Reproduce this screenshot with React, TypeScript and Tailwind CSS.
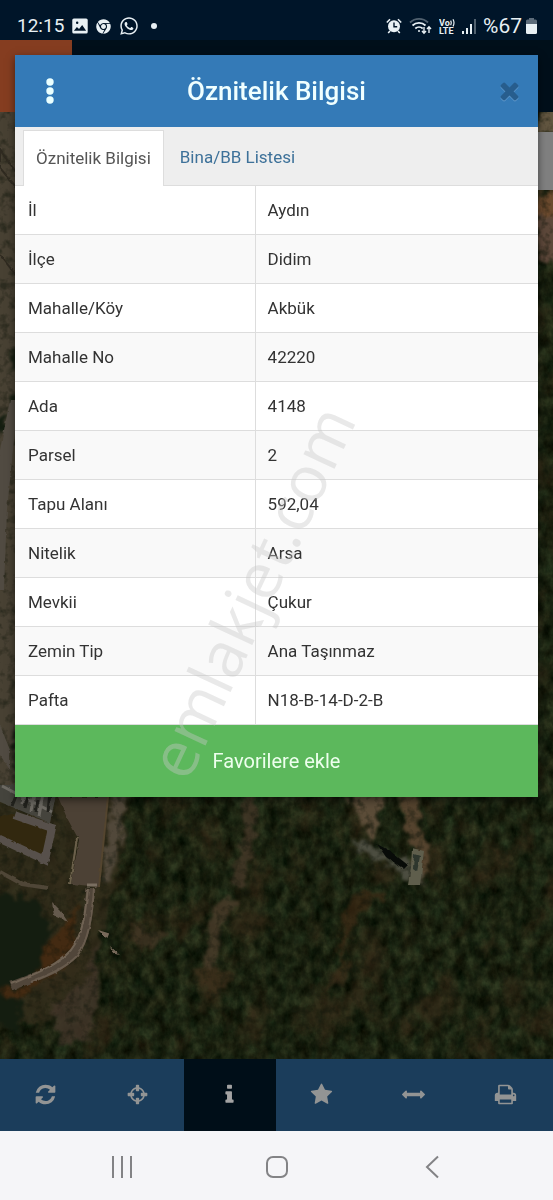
import type { ReactNode } from "react";
import { FaWhatsapp, FaChrome } from "react-icons/fa";

const FONT = "font-[Roboto,'Noto_Sans',sans-serif]";

const rows: [string, string][] = [
  ["İl", "Aydın"],
  ["İlçe", "Didim"],
  ["Mahalle/Köy", "Akbük"],
  ["Mahalle No", "42220"],
  ["Ada", "4148"],
  ["Parsel", "2"],
  ["Tapu Alanı", "592,04"],
  ["Nitelik", "Arsa"],
  ["Mevkii", "Çukur"],
  ["Zemin Tip", "Ana Taşınmaz"],
  ["Pafta", "N18-B-14-D-2-B"],
];

const tools = [
  {
    label: "Yenile",
    d: "M1639 1056q0 5-1 7-64 268-268 434.5t-478 166.5q-146 0-282.5-55t-243.5-157l-129 129q-19 19-45 19t-45-19-19-45v-448q0-26 19-45t45-19h448q26 0 45 19t19 45-19 45l-137 137q71 66 161 102t187 36q134 0 250-65t186-179q11-17 53-117 8-23 30-23h192q13 0 22.5 9.5t9.5 22.5zm25-800v448q0 26-19 45t-45 19h-448q-26 0-45-19t-19-45 19-45l138-138q-148-137-349-137-134 0-250 65t-186 179q-11 17-53 117-8 23-30 23h-199q-13 0-22.5-9.5t-9.5-22.5v-7q65-268 270-434.5t480-166.5q146 0 284 55.5t245 156.5l130-129q19-19 45-19t45 19 19 45z",
  },
  {
    label: "Konum",
    d: "M1325 1024h-109q-26 0-45-19t-19-45v-128q0-26 19-45t45-19h109q-32-108-112.5-188.5t-188.5-112.5v109q0 26-19 45t-45 19h-128q-26 0-45-19t-19-45v-109q-108 32-188.5 112.5t-112.5 188.5h109q26 0 45 19t19 45v128q0 26-19 45t-45 19h-109q32 108 112.5 188.5t188.5 112.5v-109q0-26 19-45t45-19h128q26 0 45 19t19 45v109q108-32 188.5-112.5t112.5-188.5zm339-192v128q0 26-19 45t-45 19h-143q-37 161-154.5 278.5t-278.5 154.5v143q0 26-19 45t-45 19h-128q-26 0-45-19t-19-45v-143q-161-37-278.5-154.5t-154.5-278.5h-143q-26 0-45-19t-19-45v-128q0-26 19-45t45-19h143q37-161 154.5-278.5t278.5-154.5v-143q0-26 19-45t45-19h128q26 0 45 19t19 45v143q161 37 278.5 154.5t154.5 278.5h143q26 0 45 19t19 45z",
  },
  {
    label: "Bilgi",
    active: true,
    d: "M1216 1344v128q0 26-19 45t-45 19h-512q-26 0-45-19t-19-45v-128q0-26 19-45t45-19h64v-384h-64q-26 0-45-19t-19-45v-128q0-26 19-45t45-19h384q26 0 45 19t19 45v576h64q26 0 45 19t19 45zm-128-1152v192q0 26-19 45t-45 19h-256q-26 0-45-19t-19-45v-192q0-26 19-45t45-19h256q26 0 45 19t19 45z",
  },
  {
    label: "Favoriler",
    d: "M1728 647q0 22-26 48l-363 354 86 500q1 7 1 20 0 21-10.5 35.5t-30.5 14.5q-19 0-40-12l-449-236-449 236q-22 12-40 12-21 0-31.5-14.5t-10.5-35.5q0-6 2-20l86-500-364-354q-25-27-25-48 0-37 56-46l502-73 225-455q19-41 49-41t49 41l225 455 502 73q56 9 56 46z",
  },
  {
    label: "Ölçüm",
    d: "M1792 896q0 26-19 45l-256 256q-19 19-45 19t-45-19-19-45v-128h-1024v128q0 26-19 45t-45 19-45-19l-256-256q-19-19-19-45t19-45l256-256q19-19 45-19t45 19 19 45v128h1024v-128q0-26 19-45t45-19 45 19l256 256q19 19 19 45z",
  },
  {
    label: "Yazdır",
    d: "M448 1536h896v-256h-896v256zm0-640h896v-384h-160q-40 0-68-28t-28-68v-160h-640v640zm1152 64q0-26-19-45t-45-19-45 19-19 45 19 45 45 19 45-19 19-45zm128 0v416q0 13-9.5 22.5t-22.5 9.5h-224v160q0 40-28 68t-68 28h-960q-40 0-68-28t-28-68v-160h-224q-13 0-22.5-9.5t-9.5-22.5v-416q0-79 56.5-135.5t135.5-56.5h64v-544q0-40 28-68t68-28h672q40 0 88 20t76 48l152 152q28 28 48 76t20 88v256h64q79 0 135.5 56.5t56.5 135.5z",
  },
];

function StatusBar() {
  return (
    <header className="flex h-10 items-center justify-between bg-[#001529] pl-[17px] pr-4 pt-3 text-[#e8f0f4]">
      <div className="flex items-center gap-2">
        <span className="text-[19px] leading-6">12:15</span>
        <svg viewBox="0 0 17 17" className="size-4" fill="currentColor">
          <path
            fillRule="evenodd"
            d="M2 .5h13A1.7 1.7 0 0 1 16.700 2.200v12.600A1.700 1.700 0 0 1 15 16.500H2A1.700 1.700 0 0 1 .300 14.800V2.200A1.700 1.700 0 0 1 2 .500zM2 13.500h13l-4.200-6-3.300 4.200-2.300-2.200zM5.500 3.800a1.300 1.300 0 1 0 0 2.600 1.300 1.300 0 0 0 0-2.600z"
          />
        </svg>
        <FaChrome className="size-[15px]" />
        <FaWhatsapp className="size-5" />
        <span className="ml-1 size-1.5 rounded-full bg-current" />
      </div>
      <div className="flex items-center gap-[7px]">
        <svg viewBox="0 0 16 16" className="size-4">
          <circle cx="8" cy="8.300" r="6" fill="currentColor" />
          <path d="M.8 4.500 4 1.300M15.200 4.500 12 1.300M4 13l-1.800 2M12 13l1.800 2" stroke="currentColor" strokeWidth="1.600" />
          <path d="M8 4.500v4.300h3.200" fill="none" stroke="#001529" strokeWidth="1.400" />
        </svg>
        <svg viewBox="0 0 23 18" className="h-[18px] w-[23px]" fill="none" stroke="currentColor" strokeWidth="1.800">
          <path d="M1 5.500a13 13 0 0 1 18 0" opacity=".35" />
          <path d="M3.500 8.500a9.500 9.500 0 0 1 13 0M6.300 11.500a5.500 5.500 0 0 1 7.400 0" />
          <circle cx="10" cy="14" r="1" fill="currentColor" stroke="none" />
          <path d="M15 10v6M13 14l2 2.200L17 14M20 16v-6M18 12l2-2.200L22 12" strokeWidth="1.400" />
        </svg>
        <svg viewBox="0 0 16 17" className="h-[17px] w-4" fill="currentColor">
          <text x="0" y="8" fontFamily="Roboto" fontWeight="700" fontSize="9">Vo</text>
          <path d="M11.600 2.600q1.300 2.200 0 4.600M14 1.200q2 3.600 0 7.200" fill="none" stroke="currentColor" strokeWidth="1.200" />
          <text x="0" y="16" fontFamily="Roboto" fontWeight="700" fontSize="9">LTE</text>
        </svg>
        <svg viewBox="0 0 14 15" className="h-[15px] w-[14px]" fill="currentColor">
          <path d="M0 12h2v3H0zM4 9h2v6H4zM8 5h2v10H8z" />
          <path d="M12 0h2v15h-2z" opacity=".35" />
        </svg>
        <span className="flex items-center gap-1">
          <span className="text-[21px] leading-6">%67</span>
          <svg viewBox="0 0 11 16" className="h-4 w-[11px]" fill="currentColor">
            <path d="M3 0h5v1.500h1.500A1.500 1.500 0 0 1 11 3v3H0V3a1.500 1.500 0 0 1 1.500-1.500H3z" opacity=".4" />
            <path d="M0 6h11v8.500a1.500 1.500 0 0 1-1.500 1.500h-8A1.500 1.500 0 0 1 0 14.500z" />
          </svg>
        </span>
      </div>
    </header>
  );
}

function SatelliteMap() {
  return (
    <svg
      className="absolute inset-0 size-full"
      viewBox="0 0 553 1019"
      preserveAspectRatio="none"
      aria-hidden="true"
    >
      <defs>
        <filter id="trees" x="0" y="0" width="100%" height="100%" colorInterpolationFilters="sRGB">
          <feTurbulence type="fractalNoise" baseFrequency="0.09 0.065" numOctaves="4" seed="8" />
          <feColorMatrix values=".24 .06 0 0 -.045  .26 0 0 0 .005  .18 0 0 0 -.025  0 0 0 0 1" />
        </filter>
        <filter id="soil" x="0" y="0" width="100%" height="100%" colorInterpolationFilters="sRGB">
          <feTurbulence type="fractalNoise" baseFrequency="0.026 0.02" numOctaves="5" seed="21" />
          <feColorMatrix values="0 0 0 0 .23  0 0 0 0 .17  0 0 0 0 .1  4 0 0 0 -2.05" />
        </filter>
        <filter id="rough" x="-20%" y="-20%" width="140%" height="140%" colorInterpolationFilters="sRGB">
          <feTurbulence type="fractalNoise" baseFrequency="0.1" numOctaves="3" seed="4" result="n" />
          <feDisplacementMap in="SourceGraphic" in2="n" scale="18" xChannelSelector="R" yChannelSelector="G" />
          <feGaussianBlur stdDeviation="1.4" />
        </filter>
        <filter id="soft" colorInterpolationFilters="sRGB">
          <feTurbulence type="fractalNoise" baseFrequency="0.15" numOctaves="2" seed="2" result="n" />
          <feDisplacementMap in="SourceGraphic" in2="n" scale="3" xChannelSelector="R" yChannelSelector="G" />
          <feGaussianBlur stdDeviation=".6" />
        </filter>
        <filter id="grain" x="0" y="0" width="100%" height="100%" colorInterpolationFilters="sRGB">
          <feTurbulence type="fractalNoise" baseFrequency="0.12" numOctaves="3" seed="13" />
          <feColorMatrix values="0 0 0 0 .06  0 0 0 0 .08  0 0 0 0 .04  3 0 0 0 -1.4" />
        </filter>
      </defs>
      <rect width="553" height="1019" fill="#1d2413" />
      <rect width="553" height="1019" filter="url(#trees)" />
      <rect width="553" height="1019" filter="url(#soil)" opacity=".55" />

      {/* cleared ground and foot paths */}
      <g filter="url(#rough)">
        <path d="M-10 60h32v700h-32z" fill="#484133" />
        <path d="M-10 750h138l-6 65-16 55-12 60-40 50-64 10z" fill="#352d1c" opacity=".75" />
        <path d="M112 750h14l-4 40-10 50h-10z" fill="#51483a" />
        <path d="M80 860 70 920 24 955-8 966V930l44-12 26-30z" fill="#432a12" />
        <path d="M98 900 85 940 50 970 60 1005 90 1000 98 960z" fill="#44372a" opacity=".8" />
        <path d="M130 885l40 12-30 14z" fill="#463826" opacity=".7" />
        <path d="M248 750q5 40-2 60l-10 36" fill="none" stroke="#463a29" strokeWidth="12" opacity=".8" />
        <path d="M236 866q-14-4-20 16l-8 50" fill="none" stroke="#483b29" strokeWidth="12" opacity=".85" />
        <path d="M190 925l50 10-30 20zM330 935l22-15-5 22-25 10z" fill="#3f301d" opacity=".7" />
        <path d="M345 750h44l-12 28-4 26-12-22z" fill="#5b4c38" />
        <path d="M398 750h18l6 40 8 24-7 32-13-6 5-25-12-30z" fill="#54432e" />
        <path d="M354 800l16 2 20 14 26 8 10 22-18-8-24-16-24-8z" fill="#4c4d40" />
        <path d="M362 850l26 3-30 20-12 30-8 40 4-70z" fill="#3c2814" opacity=".7" />
        <path d="M538 150h24v34h-24z" fill="#6b4a2e" />
        <path d="M538 178h24v42h-24z" fill="#5d483a" />
        <path d="M538 70h24v24h-24z" fill="#625640" />
      </g>
      <rect width="553" height="1019" filter="url(#grain)" opacity=".45" />

      {/* tree groups next to the street */}
      <g filter="url(#rough)" fill="#141d10">
        <path d="M-6 856l26 2 22 8 8 20-8 34-18 26L-6 950z" />
        <path d="M10 310h10v22H10zM10 355h10v30H10zM12 690h8v40h-8zM-2 375h9v20h-9z" />
        <path d="M-6 950l28 12-4 30-24-6z" />
      </g>

      {/* buildings, street and road */}
      <g filter="url(#soft)">
        <path d="M10 360h8L7 470l-3 80H-2V420zM-2 680l12 30v20L-2 712z" fill="#514b42" />
        <path d="M0 110l16 22v15L0 128zM0 215l16 20" fill="none" stroke="#2f2a20" strokeWidth="2" />
        <path d="M-2 745h60l-8 38-52-22z" fill="#45443d" />
        <path d="M2 746l50 26M24 750l-2 14M34 752l-3 20M43 754l-4 22" stroke="#6d6a63" strokeWidth="3" />
        <path d="M16 756l-4 10M28 756l-3 12M38 760l-2 12M50 752l-2 20" stroke="#22221d" strokeWidth="3" />
        <path d="M12 774l42 14-8 34-48-22V778z" fill="#32280f" />
        <path d="M14 775l38 13-7 32-47-22" fill="none" stroke="#57504b" strokeWidth="8" />
        <path d="M58 757h50l-9 90-28-3 8-44-12-22z" fill="#4c4135" />
        <path d="M77 798l-7 46" stroke="#6b604b" strokeWidth="2" />
        <path d="M108 757l-9 90" stroke="#54452f" strokeWidth="2" />
        <path d="M0 832l22 12 26 4" fill="none" stroke="#4f4637" strokeWidth="4" />
        <path d="M52 862l8 8 8 12-14-6z" fill="#655a4d" />
        <path d="M91 848c-3 30-5 50-18 66-14 16-36 22-62 32" fill="none" stroke="#51463a" strokeWidth="9" />
        <path d="M88 848c-3 28-5 46-17 62-14 16-36 24-60 34" fill="none" stroke="#6f6253" strokeWidth="2" />
        <path d="M94 848c-2 28-5 52-17 68-12 12-26 18-46 26" fill="none" stroke="#685b4d" strokeWidth="2" />
        <path d="M87 845h10" stroke="#7a6f61" strokeWidth="3" />
        <path d="M377 804l13 7 18 14-4 4-18-12z" fill="#080b08" />
        <path d="M412 808l12 3-4 34h-12l3-18z" fill="#5f5e4c" />
        <path d="M414 814l6 2-3 16-4-3z" fill="#2e362d" />
        <path d="M110 906l10 9-7-2zM98 890l10 3-2 5-4-4z" fill="#77695a" />
      </g>
    </svg>
  );
}

function Cell({ children, first }: { children: ReactNode; first?: boolean }) {
  return first ? (
    <th scope="row" className="w-[46%] border-r border-[#ddd] px-[13px] text-left font-normal">
      {children}
    </th>
  ) : (
    <td className="px-3">{children}</td>
  );
}

function AttributeDialog() {
  return (
    <section
      role="dialog"
      aria-labelledby="dialog-title"
      className="relative mx-[15px] mt-[15px] bg-white shadow-[0_3px_8px_rgba(0,0,0,0.5)]"
    >
      <div className="flex h-[72px] items-center justify-between bg-[#347ab7] px-[15px]">
        <button type="button" aria-label="Menü" className="flex w-10 justify-center text-[#eaffff]">
          <svg viewBox="0 0 8 26" className="h-[26px] w-2" fill="currentColor">
            <circle cx="4" cy="4" r="3.700" />
            <circle cx="4" cy="13" r="3.700" />
            <circle cx="4" cy="22" r="3.700" />
          </svg>
        </button>
        <h1 id="dialog-title" className="text-[26px] font-medium leading-8 text-[#f0ffff]">
          Öznitelik Bilgisi
        </h1>
        <button type="button" aria-label="Kapat" className="flex w-10 justify-end">
          <svg viewBox="0 0 1792 1920" className="h-[29px] w-[27px] text-[#275d8d] drop-shadow-[0_1px_0_#5f98cb]" fill="currentColor">
            <path d="M1490 1322q0 40-28 68l-136 136q-28 28-68 28t-68-28l-294-294-294 294q-28 28-68 28t-68-28l-136-136q-28-28-28-68t28-68l294-294-294-294q-28-28-28-68t28-68l136-136q28-28 68-28t68 28l294 294 294-294q28-28 68-28t68 28l136 136q28 28 28 68t-28 68l-294 294 294 294q28 28 28 68z" />
          </svg>
        </button>
      </div>

      <div role="tablist" className="flex h-[59px] items-end border-b border-[#ddd] bg-[#eeeeee] pl-2 text-[17px] leading-6">
        <button
          type="button"
          role="tab"
          aria-selected="true"
          className="-mb-px h-14 border border-b-0 border-[#ddd] bg-white px-3 pb-0.5 text-[#555]"
        >
          Öznitelik Bilgisi
        </button>
        <button type="button" role="tab" aria-selected="false" className="h-14 px-4 text-[#3d7199]">
          Bina/BB Listesi
        </button>
      </div>

      <table className="w-full border-separate border-spacing-0 text-[17px] leading-6 text-[#333]">
        <tbody>
          {rows.map(([name, value]) => (
            <tr key={name} className="h-[49px] even:bg-[#f9f9f9] [&>*]:border-b [&>*]:border-b-[#ddd]">
              <Cell first>{name}</Cell>
              <Cell>{value}</Cell>
            </tr>
          ))}
        </tbody>
      </table>

      <button type="button" className="block h-[72px] w-full bg-[#5cb85c] text-[20px] leading-7 text-[#edffed]">
        Favorilere ekle
      </button>

      <div className="pointer-events-none absolute bottom-0 left-0 right-10 top-[335px] flex items-center justify-center">
        <span className="-rotate-[65deg] whitespace-nowrap pb-3 font-['Open_Sans',sans-serif] text-[64px] font-medium leading-none text-[#c8c8c8]/40">
          emlakjet.com
        </span>
      </div>
    </section>
  );
}

export default function App() {
  return (
    <div className={`flex min-h-screen flex-col bg-[#1d2413] ${FONT}`}>
      <StatusBar />
      <main className="relative flex-1">
        <div className="absolute inset-0 overflow-hidden">
          <SatelliteMap />
          <div className="relative flex h-[72px] bg-[#000f1a]">
            <div className="w-[72px] bg-[#853d20]" />
          </div>
          <div className="relative ml-auto mt-5 h-[58px] w-12 bg-[#808080]" />
        </div>
        <AttributeDialog />
      </main>
      <nav className="grid h-[72px] grid-cols-6 bg-[#1b3d5b] text-[#929494]">
        {tools.map((t) => (
          <button
            key={t.label}
            type="button"
            aria-label={t.label}
            className={
              t.active
                ? "flex items-center justify-center bg-[#000e18] pb-0.5 pr-0.5 text-[#a3a3a3]"
                : "flex items-center justify-center pb-0.5 pr-0.5"
            }
          >
            <svg viewBox="0 0 1792 1792" className="size-[23px]" fill="currentColor">
              <path d={t.d} />
            </svg>
          </button>
        ))}
      </nav>
      <footer className="grid h-[69px] grid-cols-3 items-center justify-items-center bg-[#f5f5f8] px-11 text-[#838386]">
        <button type="button" aria-label="Son uygulamalar" className="pt-0.5">
          <svg viewBox="0 0 22 24" className="h-6 w-[22px]" stroke="currentColor" strokeWidth="2">
            <path d="M2 1v22M11 1v22M20 1v22" />
          </svg>
        </button>
        <button type="button" aria-label="Ana ekran" className="pt-0.5">
          <svg viewBox="0 0 24 24" className="size-6" fill="none" stroke="currentColor" strokeWidth="2">
            <rect x="2" y="2" width="20" height="20" rx="6" />
          </svg>
        </button>
        <button type="button" aria-label="Geri" className="pt-0.5">
          <svg viewBox="0 0 14 24" className="h-6 w-[14px]" fill="none" stroke="currentColor" strokeWidth="2">
            <path d="M13 1.500 2 12l11 10.500" />
          </svg>
        </button>
      </footer>
    </div>
  );
}
